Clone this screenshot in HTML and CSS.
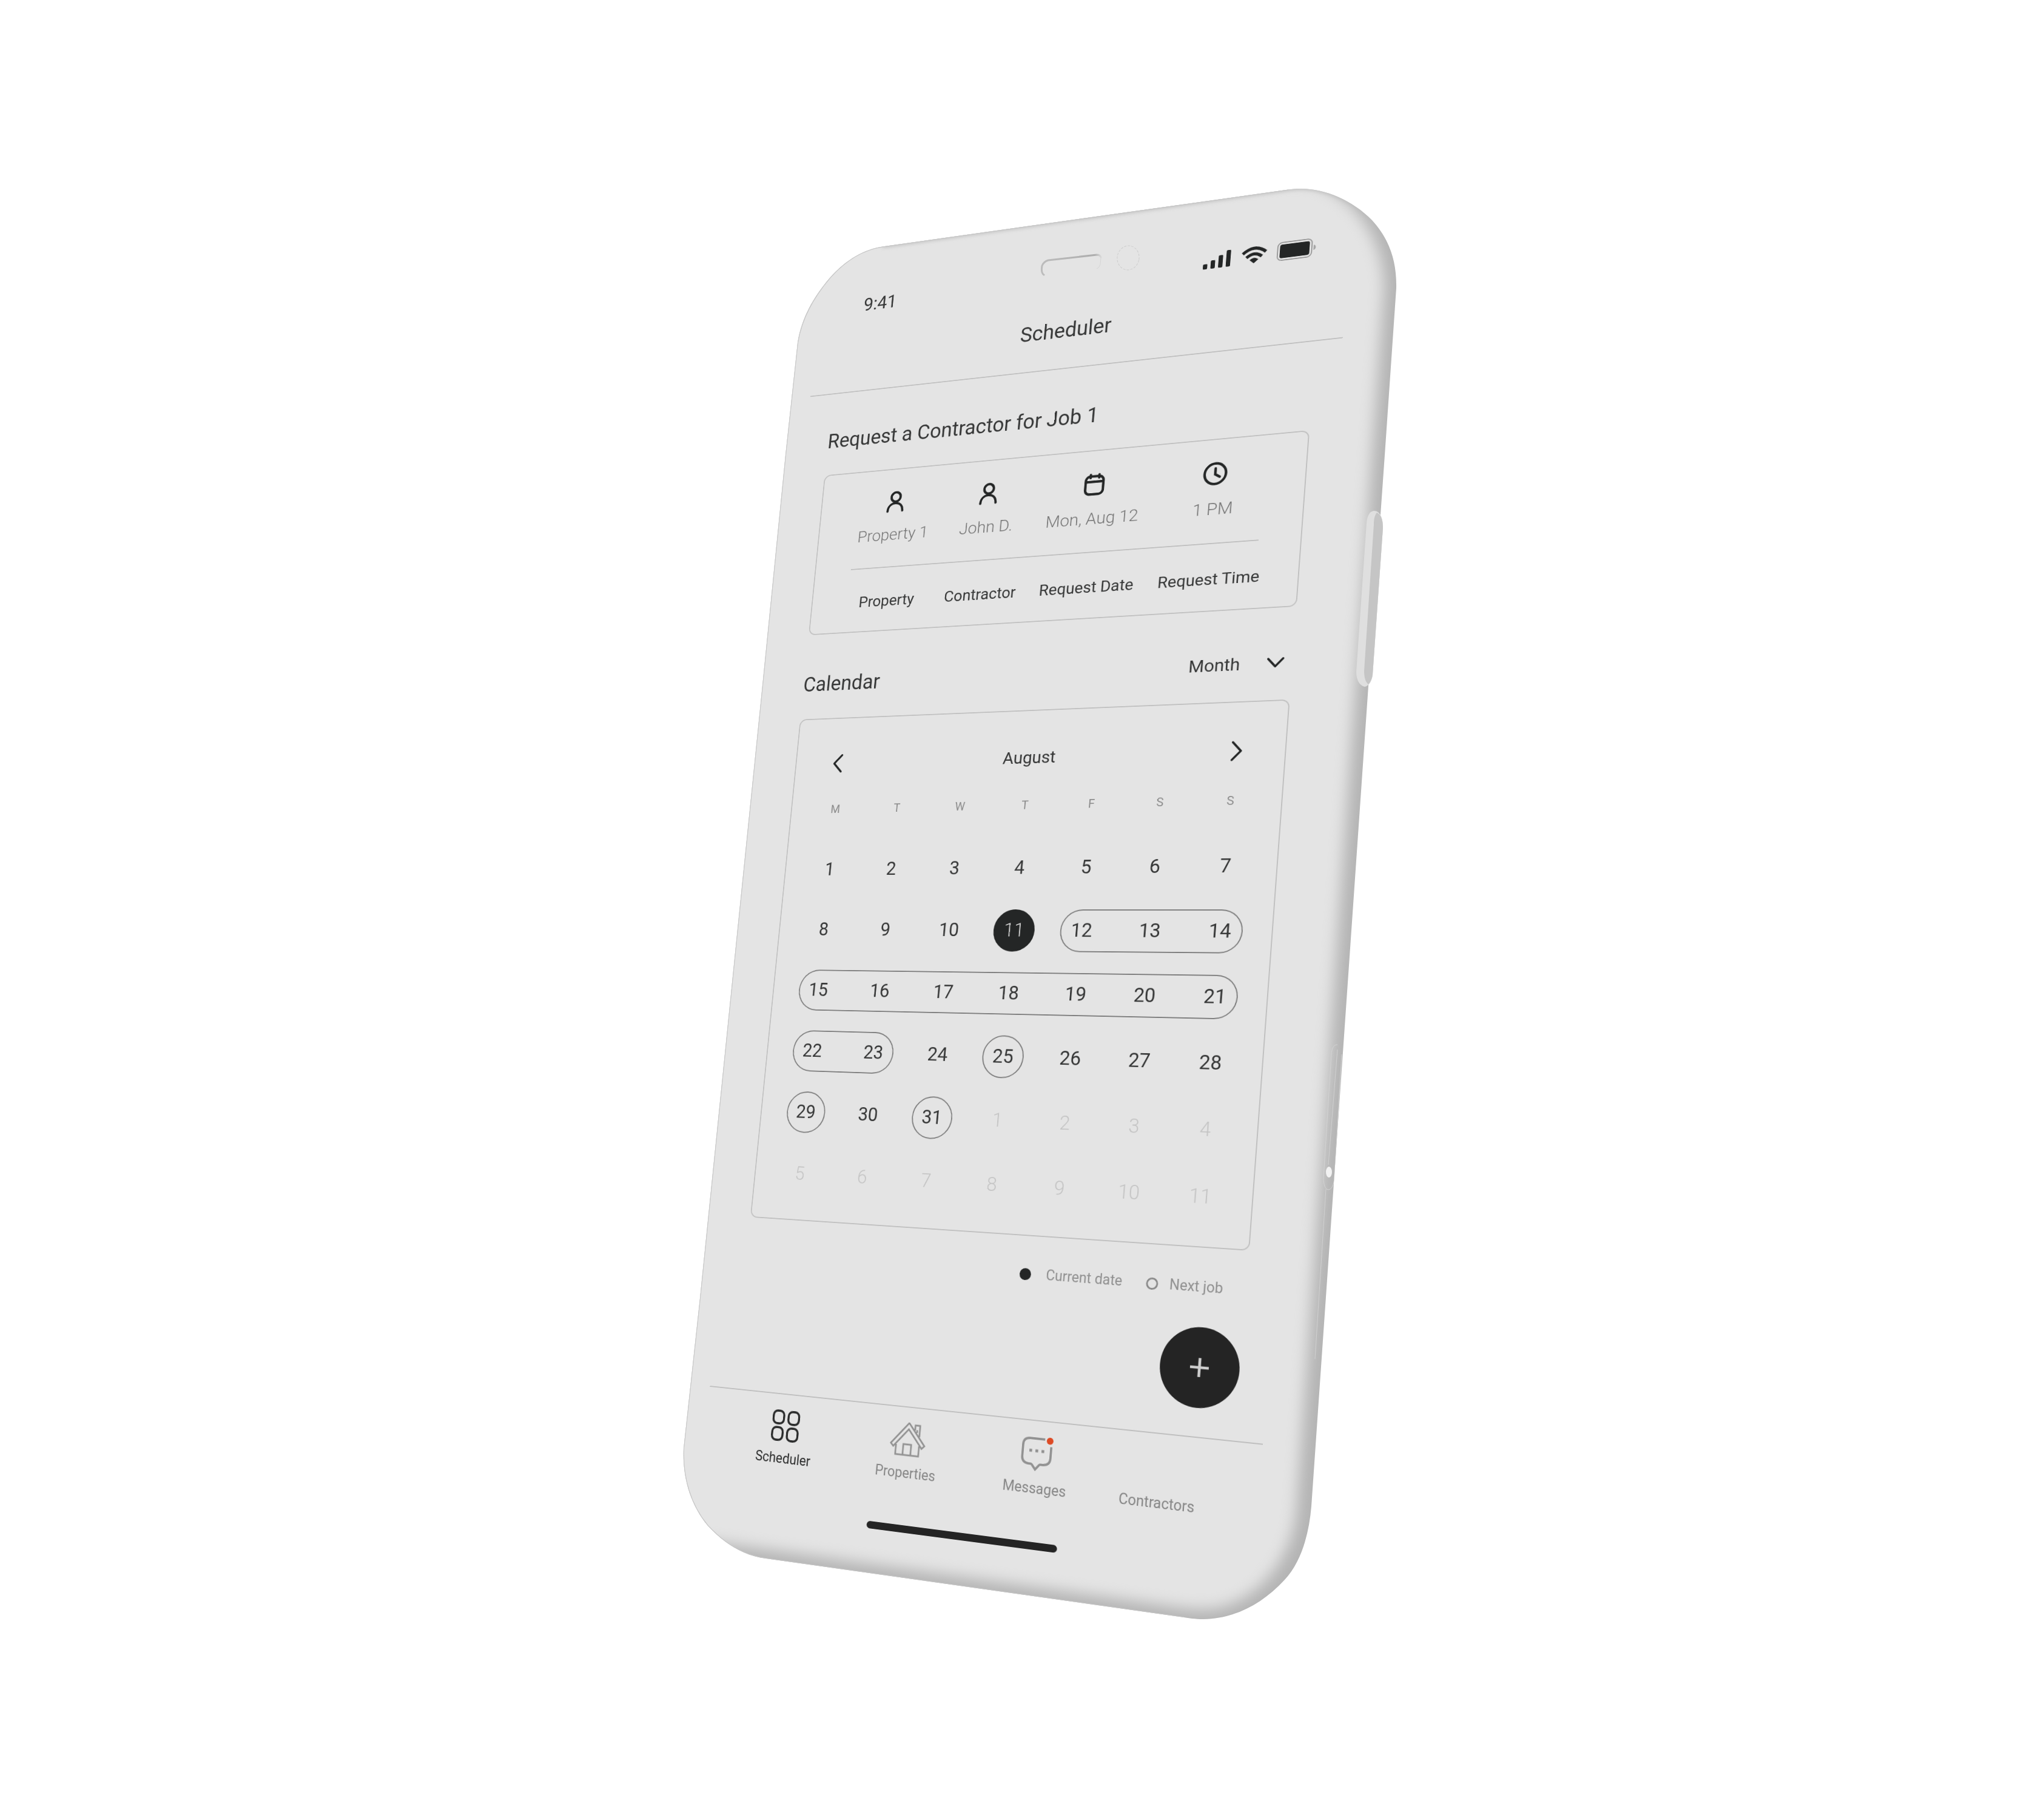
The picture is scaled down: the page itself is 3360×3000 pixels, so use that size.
FILE: index.html
```html
<!DOCTYPE html>
<html lang="en">
<head>
<meta charset="utf-8">
<meta name="viewport" content="width=device-width, initial-scale=1">
<title>Scheduler</title>
<link rel="stylesheet" href="styles.css">
</head>
<body>
<div class="stage">
  <!-- Phone body -->
  <svg class="body" viewBox="1040 280 1280 2440" aria-hidden="true">
    <defs>
      <clipPath id="shell"><path d="M1455 406.500L2124 312.500C2170 305 2225 325 2262 363C2290 393 2303 430 2302 475L2283 750L2256 1131L2162 2483C2158 2530 2145 2575 2118 2604C2080 2645 2035 2668 1984 2669C1970 2669 1960 2667 1952 2666L1263 2569C1225 2564 1195 2545 1167 2515C1138 2480 1125 2435 1127 2388L1154 2140L1211 1580L1258 1120L1295 750L1315 565C1322 520 1345 485 1369 457C1395 428 1425 411 1455 406.500Z"/></clipPath>
      <filter id="soft" x="-10%" y="-10%" width="120%" height="120%"><feGaussianBlur stdDeviation="12"/></filter>
      <filter id="rim" x="-10%" y="-10%" width="120%" height="120%"><feGaussianBlur stdDeviation="3"/></filter>
      <linearGradient id="slot" x1="0" x2="1"><stop offset="0" stop-color="#bcbcbc"/><stop offset=".9" stop-color="#adadad"/><stop offset="1" stop-color="#d8d8d8"/></linearGradient>
    </defs>
    <path fill="#dcdcdc" d="M2265 842C2276 842 2280 855 2280 870L2263 1112C2262 1122 2257 1131 2250 1132C2241 1130 2236 1120 2236 1108L2253 862C2254 850 2258 843 2265 842Z"/>
    <g clip-path="url(#shell)">
      <path fill="#b4b4b4" d="M1040 280H2320V2720H1040Z"/>
      <path fill="#e4e4e4" filter="url(#soft)" d="M1040 440L2124 297C2200 290 2282 370 2282 475L2138 2483C2132 2580 2060 2652 1984 2653L1952 2651L1263 2554L1040 2523Z"/>
      <path fill="none" stroke="#bcbcbc" stroke-width="6" filter="url(#rim)" d="M1455 405L2124 311C2170 303 2225 323 2262 361"/>
      <path fill="none" stroke="#c6c6c6" stroke-width="2" d="M1952 2666L1263 2569C1225 2564 1195 2545 1167 2515C1138 2480 1125 2435 1127 2388L1154 2140L1211 1580L1258 1120L1295 750L1315 565C1322 520 1345 485 1369 457C1395 428 1425 411 1455 406.500L2124 312.500"/>
      <path fill="none" stroke="#d2d2d2" stroke-width="1" d="M2205 1722C2198 1722 2196 1728 2195 1738L2182 1942C2182 1952 2185 1961 2190 1961C2196 1961 2199 1952 2200 1942L2212 1738"/>
      <path fill="none" stroke="#d0d0d0" stroke-width="1" d="M2205 1730L2190 1920M2186 1960L2168 2240"/>
      <ellipse cx="2191" cy="1932" rx="5" ry="9" fill="#f2f2f2"/>
    </g>
    <path fill="#dfdfdf" d="M2265 842C2276 842 2280 855 2280 870L2263 1112C2262 1122 2257 1131 2250 1132C2241 1130 2236 1120 2236 1108L2253 862C2254 850 2258 843 2265 842Z"/>
    <path fill="#c5c5c5" d="M2270 845C2277 848 2280 858 2280 870L2263 1112C2262 1119 2259 1125 2256 1128C2251 1124 2249 1116 2249 1106L2265 864C2265 855 2267 848 2270 845Z"/>
    <path fill="none" stroke="url(#slot)" stroke-width="3" stroke-linecap="round" d="M1721 453Q1716 450 1718 438Q1721 431 1728 429L1808 420Q1814 420 1815 424"/>
    <path fill="none" stroke="#d6d6d6" stroke-width="1" d="M1815 424L1814 436Q1812 442 1808 443"/>
    <ellipse cx="1860" cy="425" rx="18" ry="20" fill="none" stroke="#cdcdcd" stroke-width="1" stroke-dasharray="4 2" transform="rotate(12 1860 425)"/>
  </svg>

  <div class="screen">
    <header class="top">
      <div class="status">
        <time>9:41</time>
        <div class="status-icons">
          <svg width="52" height="32" viewBox="0 0 52 32" fill="#242626" aria-label="Signal"><rect y="22" width="8" height="10" rx="2"/><rect x="14" y="16" width="8" height="16" rx="2"/><rect x="28" y="8" width="8" height="24" rx="2"/><rect x="42" width="8" height="32" rx="2"/></svg>
          <svg width="46" height="32" viewBox="0 0 46 32" fill="none" stroke="#242626" stroke-width="6" aria-label="Wi-Fi"><path d="M2 12Q23-6 44 12M9 20Q23 8 37 20"/><path d="M23 32L15 25Q23 18 31 25Z" fill="#242626" stroke="none"/></svg>
          <svg width="70" height="36" viewBox="0 0 70 36" aria-label="Battery"><rect x="1" y="1" width="61" height="34" rx="8" fill="none" stroke="#979797" stroke-width="2"/><rect x="5" y="5" width="53" height="26" rx="4" fill="#242626"/><path d="M65 13Q69 14 69 18T65 23Z" fill="#a6a6a6"/></svg>
        </div>
      </div>
      <h1>Scheduler</h1>
    </header>

    <main>
      <h2>Request a Contractor for Job 1</h2>
      <section class="card request">
        <div class="cols">
          <div class="value"><svg class="icon" viewBox="0 0 24 24"><circle cx="12" cy="8.300" r="4"/><path d="M5.500 20.300C5.700 16 8.300 13.600 12 13.600s6.300 2.400 6.500 6.700"/></svg><span>Property 1</span></div>
          <div class="value"><svg class="icon" viewBox="0 0 24 24"><circle cx="12" cy="8.300" r="4"/><path d="M5.500 20.300C5.700 16 8.300 13.600 12 13.600s6.300 2.400 6.500 6.700"/></svg><span>John D.</span></div>
          <div class="value"><svg class="icon" viewBox="0 0 24 24"><rect x="4.800" y="5.500" width="14.400" height="14.800" rx="3.600"/><path d="M4.800 10h14.400M8.500 4.200v2.500M15.500 4.200v2.500"/></svg><span>Mon, Aug 12</span></div>
          <div class="value"><svg class="icon" viewBox="0 0 24 24"><circle cx="12" cy="12" r="8.300"/><path d="M12 7.700V12.500l3.600 2.200"/></svg><span>1 PM</span></div>
        </div>
        <hr>
        <div class="cols labels"><span>Property</span><span>Contractor</span><span>Request Date</span><span>Request Time</span></div>
      </section>

      <div class="heading">
        <h2>Calendar</h2>
        <div class="picker">
          <select aria-label="Calendar view"><option>Month</option><option>Week</option><option>Day</option></select>
          <svg viewBox="0 0 24 24" class="icon chevron"><path d="M5.500 8.500l6.500 7 6.500-7"/></svg>
        </div>
      </div>

      <section class="card calendar">
        <div class="month">
          <button type="button" aria-label="Previous month"><svg viewBox="0 0 24 24" class="chevron"><path d="M16 4L8.500 12l7.500 8"/></svg></button>
          <h3>August</h3>
          <button type="button" aria-label="Next month"><svg viewBox="0 0 24 24" class="chevron"><path d="M8 4l7.500 8L8 20"/></svg></button>
        </div>
        <table>
          <thead><tr><th>M</th><th>T</th><th>W</th><th>T</th><th>F</th><th>S</th><th>S</th></tr></thead>
          <tbody>
            <tr><td>1</td><td>2</td><td>3</td><td>4</td><td>5</td><td>6</td><td>7</td></tr>
            <tr><td>8</td><td>9</td><td>10</td><td><span class="day today">11</span></td><td><span class="day start">12</span></td><td><span class="day mid">13</span></td><td><span class="day end">14</span></td></tr>
            <tr><td><span class="day start">15</span></td><td><span class="day mid">16</span></td><td><span class="day mid">17</span></td><td><span class="day mid">18</span></td><td><span class="day mid">19</span></td><td><span class="day mid">20</span></td><td><span class="day end">21</span></td></tr>
            <tr><td><span class="day start">22</span></td><td><span class="day end">23</span></td><td>24</td><td><span class="day job">25</span></td><td>26</td><td>27</td><td>28</td></tr>
            <tr><td><span class="day job">29</span></td><td>30</td><td><span class="day job">31</span></td><td class="out">1</td><td class="out">2</td><td class="out">3</td><td class="out">4</td></tr>
            <tr class="out"><td>5</td><td>6</td><td>7</td><td>8</td><td>9</td><td>10</td><td>11</td></tr>
          </tbody>
        </table>
      </section>

      <ul class="legend">
        <li><i class="dot"></i>Current date</li>
        <li><i class="dot ring"></i>Next job</li>
      </ul>
      <button type="button" class="add" aria-label="Add job"><svg viewBox="0 0 36 36"><path d="M18 1v34M1 18h34"/></svg></button>
    </main>

    <footer>
      <nav>
        <a href="#scheduler" class="active"><svg viewBox="0 0 60 60" stroke-width="4"><rect x="4" y="4" width="21" height="23" rx="8"/><rect x="34" y="4" width="21" height="23" rx="8"/><rect x="4" y="34" width="21" height="23" rx="8"/><rect x="34" y="34" width="21" height="23" rx="8"/></svg>Scheduler</a>
        <a href="#properties"><svg class="house" viewBox="0 0 72 60" stroke-width="3"><path d="M36 1L4 39l5 5L36 12l27 32 5-5ZM14 40v18h44V40M28 58V39h15v19M48 13V4h9v20M52 12v5"/></svg>Properties</a>
        <a href="#messages"><svg viewBox="0 0 60 60" stroke-width="4"><path d="M43 4H16Q4 4 4 16V36Q4 47 16 48H20Q22 48 24 51L29 57L34 51Q36 48 38 48H43Q55 47 55 36V16"/><path d="M16 25h5M27 25h5M38 25h5" stroke-width="5"/><circle cx="52" cy="6" r="6" fill="#dd4a24" stroke="none"/></svg>Messages</a>
        <a href="#contractors"><span class="blank"></span>Contractors</a>
      </nav>
      <div class="home-bar"></div>
    </footer>
  </div>
</div>
</body>
</html>
```
FILE: styles.css
```css
* { box-sizing: border-box; margin: 0; padding: 0; }

body {
  background: #fff;
  color: #363737;
  font-family: Roboto, "Liberation Sans", sans-serif;
  font-weight: 300;
}

/* The flat body drawing and the tilted screen share one centred cell. */
.stage {
  display: grid;
  place-items: center;
  min-height: 100vh;
  overflow: hidden;
}

.body {
  grid-area: 1 / 1;
  width: 1280px;
  height: 2440px;
}

/* Perspective tilt of the whole screen. */
.screen {
  grid-area: 1 / 1;
  display: flex;
  flex-direction: column;
  width: 1030px;
  height: 2460px;
  transform-origin: 0 0;
  transform: matrix3d(0.742534, -0.121913, 0, -0.0000992029, -0.084736, 0.780287, 0, -0.0000267866, 0, 0, 1, 0, 190.237, 192.971, 0, 1);
}

svg { display: block; }
h1, h2, h3 { font-weight: 400; }
h1, h2 { font-size: 40px; line-height: 48px; }
button { background: none; border: 0; cursor: pointer; }

/* Header */
.top {
  height: 242px;
  border-bottom: 2px solid #bfbfbf;
}

.status {
  display: flex;
  align-items: center;
  justify-content: space-between;
  height: 126px;
  padding: 0 58px 0 96px;
  font-size: 36px;
  font-weight: 400;
}

.status-icons { display: flex; align-items: center; gap: 18px; }

h1 { margin-top: 16px; text-align: center; }

/* Content */
main {
  display: flex;
  flex-direction: column;
  padding: 74px 46px 48px 48px;
}

.card {
  border: 2px solid #c0c0c0;
  border-radius: 14px;
}

.icon {
  width: 56px;
  height: 56px;
  fill: none;
  stroke: #242626;
  stroke-width: 2;
  stroke-linecap: round;
}

.request { margin-top: 44px; padding: 36px 74px 40px; }

.cols {
  display: grid;
  grid-template-columns: 144px 142px 178px 180px;
  gap: 45px;
  margin-left: 8px;
  font-size: 30px;
  line-height: 36px;
  text-align: center;
  white-space: nowrap;
}

.value {
  display: flex;
  flex-direction: column;
  align-items: center;
  gap: 20px;
  color: #757575;
  font-size: 32px;
}

.labels { font-weight: 400; }

.cols + hr {
  height: 2px;
  margin: 46px 0 48px;
  border: 0;
  background: #bfbfbf;
}

.heading {
  display: flex;
  align-items: center;
  justify-content: space-between;
  margin-top: 76px;
  padding-right: 2px;
}

.picker { position: relative; }

.picker select {
  appearance: none;
  border: 0;
  background: none;
  padding-right: 90px;
  color: inherit;
  font: 400 32px/48px Roboto, "Liberation Sans", sans-serif;
}

.picker .chevron {
  position: absolute;
  top: 0;
  right: 0;
  height: 48px;
  pointer-events: none;
}

.chevron {
  fill: none;
  stroke: #242626;
  stroke-width: 2;
  stroke-linecap: round;
  stroke-linejoin: round;
}

.calendar { margin-top: 44px; padding: 64px 26px 27px 28px; }

.month {
  display: flex;
  align-items: center;
  justify-content: space-between;
  padding: 0 34px;
}

.month h3 { font-size: 32px; line-height: 48px; }
.month svg { width: 48px; height: 48px; }

table {
  width: 100%;
  table-layout: fixed;
  border-collapse: collapse;
  text-align: center;
}

th {
  padding: 44px 0 37px;
  color: #8a8a8a;
  font-size: 22px;
  font-weight: 400;
  line-height: 44px;
}

td {
  height: 116px;
  font-size: 35px;
  font-weight: 400;
  line-height: 74px;
}

.out { color: #c4c4c4; font-weight: 300; }
.out td { font-weight: 300; }

.day {
  display: block;
  height: 78px;
  border: 2px solid #7c7c7c;
}

.today, .job { width: 78px; margin: 0 auto; border-radius: 50%; }
.today { background: #242626; border-color: #242626; color: #d2d2d2; font-weight: 300; }
.start { margin-left: 24px; padding-right: 24px; border-right: 0; border-radius: 39px 0 0 39px; }
.mid { border-width: 2px 0; }
.end { margin-right: 24px; padding-left: 24px; border-left: 0; border-radius: 0 39px 39px 0; }

.legend {
  display: flex;
  justify-content: flex-end;
  gap: 42px;
  margin-top: 51px;
  padding-right: 40px;
  list-style: none;
  color: #8f8f8f;
  font-size: 25px;
  font-weight: 400;
  line-height: 32px;
}

.legend li { display: flex; align-items: center; gap: 20px; }
.legend li:first-child { gap: 28px; }

.dot {
  width: 21px;
  height: 21px;
  border-radius: 50%;
  background: #242626;
}

.ring { background: none; border: 3px solid #8a8a8a; }

.add {
  display: grid;
  place-items: center;
  align-self: flex-end;
  width: 136px;
  height: 136px;
  margin: 52px 2px 0 0;
  border-radius: 50%;
  background: #242424;
}

.add svg { width: 34px; height: 34px; stroke: #cfcfcf; stroke-width: 5; }

/* Tab bar */
footer { border-top: 2px solid #bfbfbf; }

nav {
  display: grid;
  grid-template-columns: 240px 240px 240px 192px;
  padding: 26px 0 0 42px;
}

nav a {
  display: flex;
  flex-direction: column;
  align-items: center;
  gap: 14px;
  color: #858585;
  font-size: 25px;
  font-weight: 400;
  line-height: 32px;
  text-decoration: none;
}

nav svg, .blank { width: 60px; height: 60px; fill: none; stroke: #929292; }
nav .house { width: 72px; }
nav .active { color: #2b2c2c; }
nav .active svg { stroke: #2b2c2c; }

.home-bar {
  width: 354px;
  height: 13px;
  margin: 75px auto 0;
  border-radius: 7px;
  background: #242424;
}
```
